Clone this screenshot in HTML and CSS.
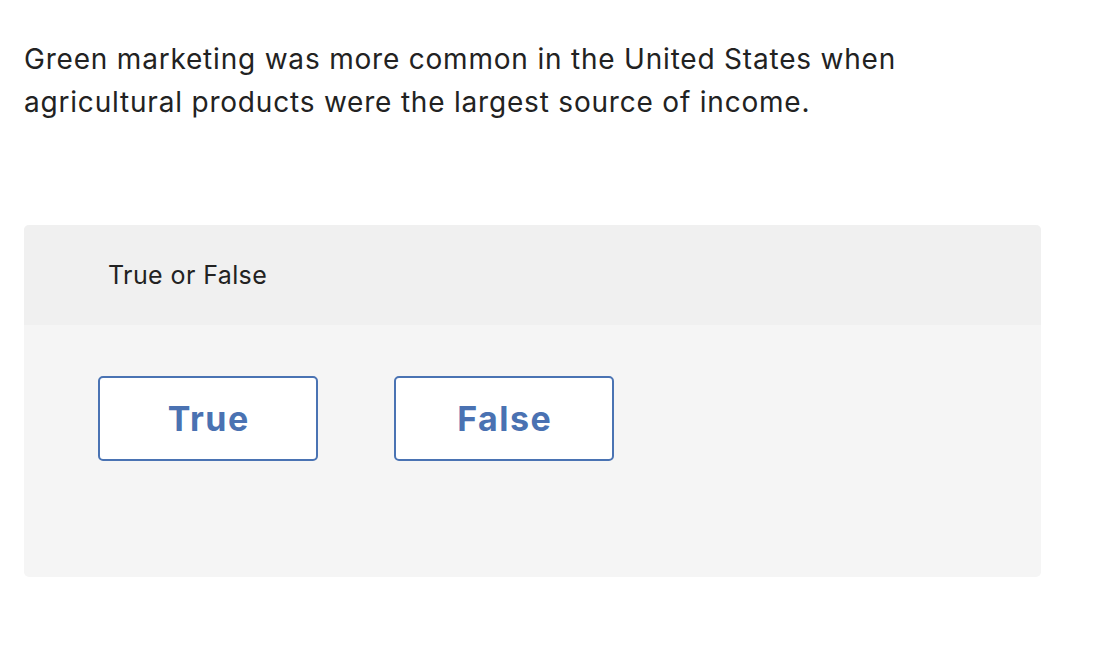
FILE: index.html
```html
<!DOCTYPE html>
<html>
<head>
<meta charset="utf-8">
<link rel="stylesheet" href="styles.css">
</head>
<body>
<div class="page">
  <p class="question">Green marketing was more common in the United States when agricultural products were the largest source of income.</p>
  <div class="card">
    <div class="card-head">True or False</div>
    <div class="card-body">
      <button class="choice">True</button>
      <button class="choice">False</button>
    </div>
  </div>
</div>
</body>
</html>
```
FILE: styles.css
```css
html, body {
  margin: 0;
  padding: 0;
  background: #ffffff;
}
.page {
  padding: 38px 0 0 24px;
  width: 1017px;
  font-family: Inter, "Open Sans", sans-serif;
  color: #222222;
}
.question {
  margin: 0;
  font-size: 28px;
  line-height: 43px;
  letter-spacing: 0.8px;
  width: 940px;
}
.card {
  margin-top: 101px;
  border-radius: 5px;
  overflow: hidden;
  background: #f5f5f5;
}
.card-head {
  background: #f0f0f0;
  height: 100px;
  box-sizing: border-box;
  padding: 34px 0 0 84px;
  font-size: 25px;
  line-height: 32px;
  letter-spacing: 0.4px;
}
.card-body {
  height: 252px;
  box-sizing: border-box;
  padding: 51px 0 0 74px;
  display: flex;
  gap: 76px;
  align-items: flex-start;
}
.choice {
  width: 220px;
  height: 85px;
  border: 2px solid #4a73b3;
  border-radius: 5px;
  background: #ffffff;
  color: #4a72b2;
  font-family: Inter, "Open Sans", sans-serif;
  font-weight: 700;
  font-size: 34px;
  letter-spacing: 1.5px;
  text-indent: 1.5px;
  padding: 0;
  cursor: pointer;
}
```
